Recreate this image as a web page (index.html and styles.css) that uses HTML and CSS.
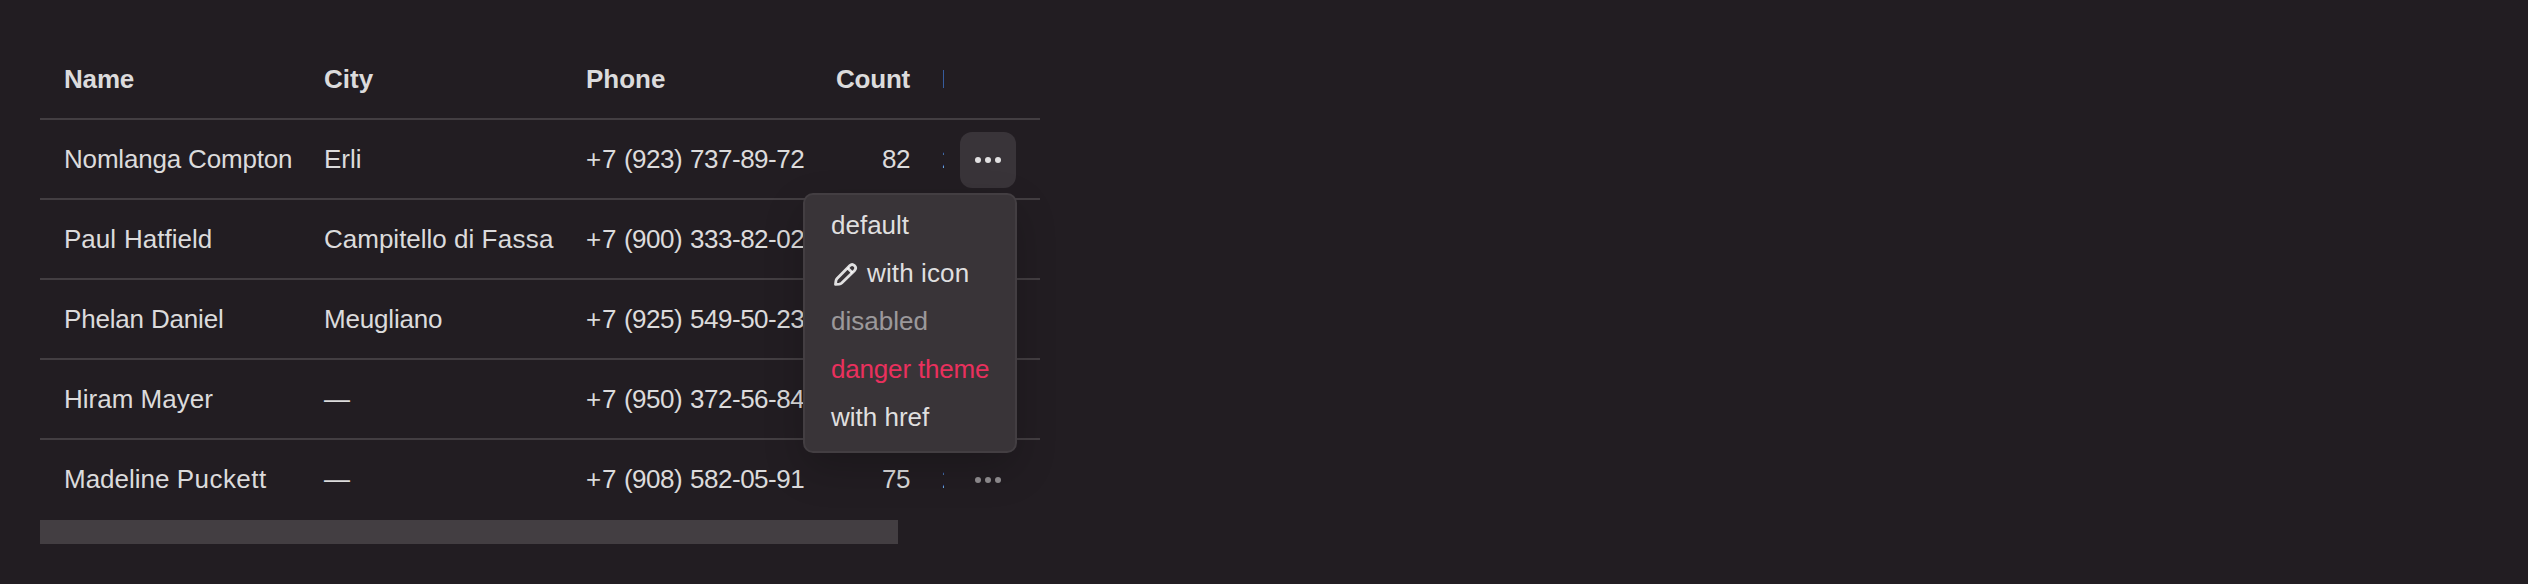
FILE: index.html
```html
<!DOCTYPE html>
<html lang="en">
<head>
<meta charset="utf-8">
<title>Table with row actions</title>
<link rel="stylesheet" href="styles.css">
</head>
<body>
<main class="page">
  <div class="table">
    <div class="row head"><span class="snug">Name</span><span>City</span><span>Phone</span><span class="count">Count</span><span class="date">Date</span></div>
    <div class="row"><span class="snug">Nomlanga Compton</span><span>Erli</span><span class="phone"><span class="plus">+</span>7 (923) 737-89-72</span><span class="count">82</span><span class="date">2019-03-15</span>
      <div class="actions">
        <button class="more active" aria-label="Actions"><svg width="32" height="32" viewBox="0 0 16 16" fill="currentColor"><circle cx="3" cy="8" r="1.5"/><circle cx="8" cy="8" r="1.5"/><circle cx="13" cy="8" r="1.5"/></svg></button>
        <div class="menu">
          <div class="item">default</div>
          <div class="item airy"><svg class="pencil" width="32" height="32" viewBox="0 0 32 32" fill="none" stroke="currentColor" stroke-width="2.8" stroke-linejoin="round"><path d="M4.5 27.4 4.9 24.1Q5.1 22.6 6.1 21.6L18.9 8.6Q21.1 6.4 23.4 8.6Q25.9 11.1 23.6 13.4L10.7 26Q9.7 26.9 8.2 27.1Z"/><path d="m16.6 10.9 4.8 4.8"/></svg>with icon</div>
          <div class="item disabled">disabled</div>
          <div class="item danger snug">danger theme</div>
          <div class="item">with href</div>
        </div>
      </div>
    </div>
    <div class="row"><span class="parted">Paul Hatfield</span><span>Campitello di <span class="wide">Fassa</span></span><span class="phone"><span class="plus">+</span>7 (900) 333-82-02</span></div>
    <div class="row"><span class="snug">Phelan Daniel</span><span class="snug">Meugliano</span><span class="phone"><span class="plus">+</span>7 (925) 549-50-23</span></div>
    <div class="row"><span>Hiram Mayer</span><span>—</span><span class="phone"><span class="plus">+</span>7 (950) 372-56-84</span></div>
    <div class="row last"><span>Madeline <span class="wider">Puckett</span></span><span>—</span><span class="phone"><span class="plus">+</span>7 (908) 582-05-91</span><span class="count">75</span><span class="date">2019-03-15</span>
      <div class="actions">
        <button class="more" aria-label="Actions"><svg width="32" height="32" viewBox="0 0 16 16" fill="currentColor"><circle cx="3" cy="8" r="1.5"/><circle cx="8" cy="8" r="1.5"/><circle cx="13" cy="8" r="1.5"/></svg></button>
      </div>
    </div>
  </div>
  <div class="scrollbar"></div>
</main>
</body>
</html>
```

FILE: styles.css
```css
body {
  margin: 0;
  background: #221d22;
  color: rgba(255, 255, 255, 0.85);
  font: 26px/36px "Liberation Sans", Arial, sans-serif;
}

.page {
  width: 1000px;
  padding: 40px;
}

.row {
  display: grid;
  grid-template-columns: 268px 262px 250px 106px 18px 96px;
  align-items: center;
  box-sizing: border-box;
  height: 80px;
  border-bottom: 2px solid #433e42;
}

.row.last {
  border-bottom-color: transparent;
}

.row > span {
  padding-left: 16px;
  white-space: nowrap;
}

.row > span:first-child {
  padding-left: 24px;
}

.head {
  font-weight: 700;
}

.row > .count {
  padding-right: 16px;
  text-align: right;
  letter-spacing: -0.4px;
}

.head > .count {
  letter-spacing: -0.22px;
}

.row > .date {
  overflow: hidden;
}

/* Tracking adjustments */
.phone {
  letter-spacing: -0.5px;
  word-spacing: 1.25px;
}

.plus {
  letter-spacing: 0.8px;
}

.snug {
  letter-spacing: -0.18px;
}

.airy {
  letter-spacing: 0.12px;
}

.parted {
  word-spacing: 0.7px;
}

.wide {
  letter-spacing: 0.3px;
}

.wider {
  letter-spacing: 0.45px;
}

.actions {
  position: relative;
  padding: 2px 0 0 16px;
}

.more {
  display: flex;
  align-items: center;
  justify-content: center;
  width: 56px;
  height: 56px;
  padding: 0;
  border: 0;
  border-radius: 12px;
  background: transparent;
  color: rgba(255, 255, 255, 0.5);
}

.more.active {
  background: #393439;
  color: rgba(255, 255, 255, 0.85);
}

.menu {
  position: absolute;
  z-index: 1;
  top: 63px;
  right: 23px;
  box-sizing: border-box;
  width: 214px;
  height: 260px;
  padding: 6px 0;
  border: 2px solid #433e42;
  border-radius: 10px;
  background: #393438;
  box-shadow: 0 16px 40px rgba(0, 0, 0, 0.2);
}

.item {
  display: flex;
  align-items: center;
  height: 48px;
  padding-left: 26px;
  white-space: nowrap;
}

.pencil {
  margin-right: 4px;
}

.disabled {
  color: rgba(255, 255, 255, 0.5);
}

.danger {
  color: #e9305d;
}

.scrollbar {
  width: 858px;
  height: 24px;
  background: #433e42;
}
```
